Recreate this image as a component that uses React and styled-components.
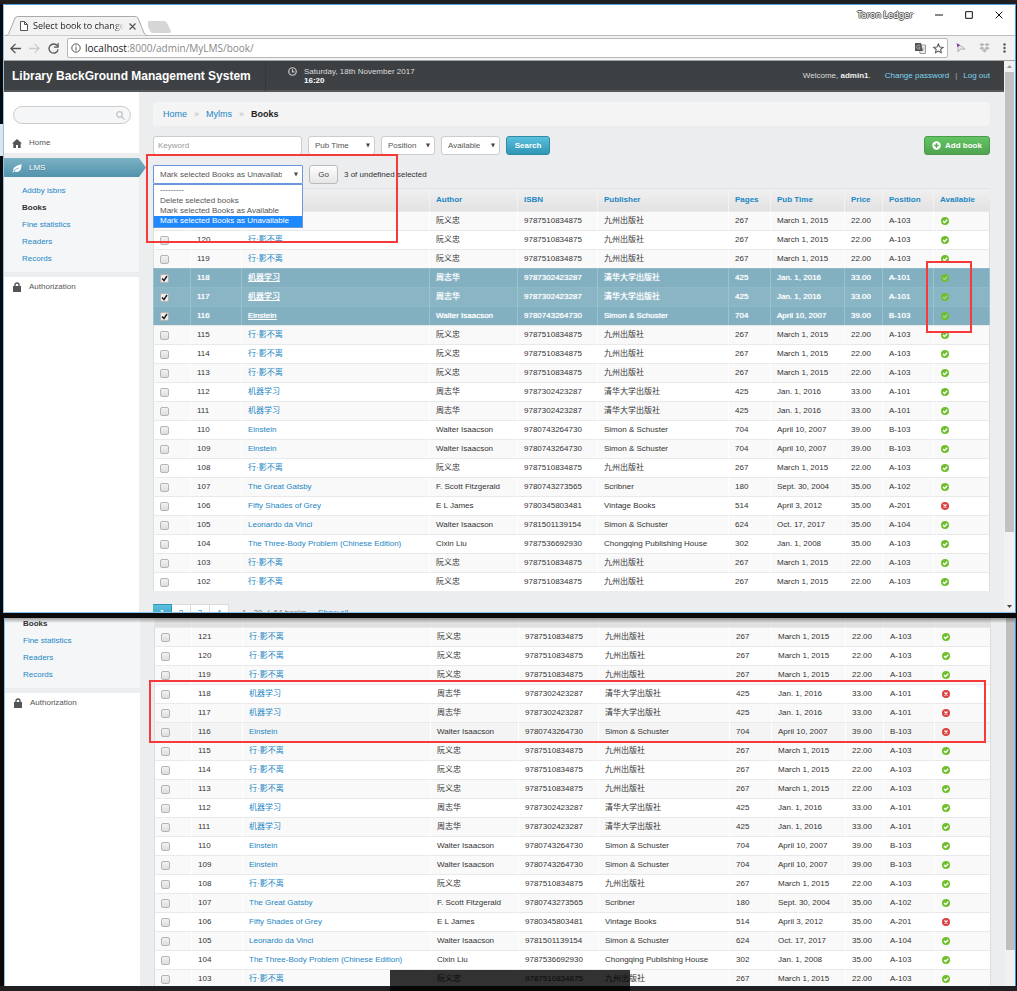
import React from "react";
import styled, { createGlobalStyle, css } from "styled-components";

const GlobalStyle = createGlobalStyle`
  * { box-sizing: border-box; }
  body { margin: 0; background: #000; overflow: hidden; }
  body, input, select, button, table {
    font-family: "Liberation Sans", Arial, "Noto Sans CJK SC", sans-serif;
    font-size: 8px;
    line-height: 10px;
  }
  ul { list-style: none; margin: 0; padding: 0; }
  a { color: #1b86c4; text-decoration: none; }
`;

const Desktop = styled.div`
  position: relative;
  display: flex;
  flex-direction: column;
  height: 100vh;
  overflow: hidden;
  background: #0a0a0a;
  border-top: 4px solid #202020;
`;

const BrowserWindow = styled.section`
  flex: none;
  margin: 0 1px 5px 3px;
  border: 1px solid #4ba0e0;
  border-left-color: #8cc3ec;
  border-bottom-color: #8cc3ec;
  background: #fff;
`;

const RearWindow = styled.section`
  position: relative;
  flex: 1;
  min-height: 0;
  display: flex;
  overflow: hidden;
  margin: 0 1px 0 4px;
  border: solid #3a96dd;
  border-width: 0 1px;
  border-left-color: #8cc3ec;
  background: #ecedef;
`;

const WindowShade = styled.div`
  position: absolute;
  z-index: 1;
  top: 0;
  left: 0;
  right: 0;
  height: 5px;
  background: linear-gradient(rgba(0, 0, 0, 0.35), rgba(0, 0, 0, 0));
  pointer-events: none;
`;

const TitleBar = styled.header`
  display: flex;
  align-items: flex-end;
  justify-content: space-between;
  height: 31px;
  padding-left: 2px;
  background: linear-gradient(#fff 30px, #bdbdbd 30px);
`;

const Tabs = styled.div`
  display: flex;
`;

const Tab = styled.div`
  position: relative;
  display: flex;
  align-items: center;
  width: 142px;
  height: 20px;
  padding: 0 12px 0 14px;
  gap: 5px;
  font: 9px/18px "Open Sans", sans-serif;
  color: #222;
`;

const TabShape = styled.svg`
  position: absolute;
  inset: 0;
`;

const TabLabel = styled.span`
  position: relative;
  flex: 1;
  overflow: hidden;
  white-space: nowrap;
  mask-image: linear-gradient(90deg, #000 88%, transparent);
`;

const TabIcon = styled.svg`
  position: relative;
  flex: none;
`;

const WindowButtons = styled.div`
  display: flex;
  align-items: center;
  align-self: flex-start;
  height: 20px;
  padding-right: 12px;
  gap: 22px;
`;

const UserName = styled.span`
  font: 9px/12px "Noto Sans", sans-serif;
  color: #fff;
  text-shadow: -1px 0 #555, 1px 0 #555, 0 -1px #555, 0 1px #555;
`;

const IconButton = styled.button`
  display: flex;
  padding: 0;
  border: 0;
  background: none;
`;

const Toolbar = styled.div`
  display: flex;
  align-items: center;
  height: 25px;
  padding: 0 9px 0 6px;
  gap: 8px;
  background: #f2f2f2;
  border-bottom: 1px solid #a5a5a5;
`;

const AddressBox = styled.label`
  flex: 1;
  display: flex;
  align-items: center;
  height: 20px;
  padding: 0 3px;
  gap: 4px;
  background: #fff;
  border: 1px solid #b8b8b8;
  border-radius: 2px;
`;

const AddressText = styled.span`
  flex: 1;
  font: 10px/16px "Open Sans", sans-serif;
  color: #888;
  b { font-weight: 400; color: #222; }
`;

const ToolbarIcons = styled.div`
  display: flex;
  align-items: center;
  gap: 13px;
`;

const Viewport = styled.div`
  display: flex;
`;

const Site = styled.div`
  flex: 1;
  min-width: 0;
`;

const SiteHeader = styled.header`
  display: flex;
  align-items: center;
  height: 31px;
  padding: 0 14px 0 8px;
  background: linear-gradient(#3b3f42, #3e4245);
  border-bottom: 2px solid #55585a;
  color: #ddd;
`;

const SiteTitle = styled.h1`
  margin: 0;
  width: 254px;
  line-height: 30px;
  font-size: 12px;
  color: #fff;
  border-right: 1px solid #34383a;
`;

const Clock = styled.div`
  display: flex;
  flex: 1;
  padding-left: 22px;
  gap: 7px;
  line-height: 9px;
  b { display: block; color: #fff; }
`;

const UserTools = styled.div`
  display: flex;
  color: #ddd;
  a { color: #7fd3f0; }
  b { color: #eee; }
`;

const Welcome = styled.span`
  margin-right: 14px;
`;

const Divider = styled.span`
  margin: 0 6px;
  color: #aaa;
`;

const Body = styled.div`
  display: flex;
  background: #ecedef;
`;

const Sidebar = styled.nav`
  flex: none;
  width: 135px;
  background: #fff;
  color: #666;
`;

const SearchWrap = styled.label`
  display: flex;
  align-items: center;
  height: 18px;
  margin: 14px 8px 9px 9px;
  padding: 0 5px 0 8px;
  border: 1px solid #ccc;
  border-radius: 9px;
  background: #f5f6f8;
`;

const SearchInput = styled.input`
  flex: 1;
  min-width: 0;
  padding: 0;
  border: 0;
  outline: 0;
  background: none;
`;

const MenuItem = styled.a`
  display: flex;
  align-items: center;
  height: 20px;
  padding-left: 8px;
  gap: 7px;
  color: #555;
`;

const ActiveItem = styled(MenuItem)`
  position: relative;
  height: 19px;
  margin-top: 5px;
  color: #fff;
  background: linear-gradient(#7cb1c4, #5193ad);
  text-shadow: 0 1px #4a8299;
`;

const Arrow = styled.svg`
  position: absolute;
  left: 100%;
  top: 0;
`;

const MenuGap = styled.div`
  height: 5px;
  background: #ecedef;
  & + a { margin-top: 0; }
`;

const SubMenu = styled.ul`
  padding: ${(p) => (p.$scrolled ? "0 0 5px" : "5px 0")};
  background: #f5f6f8;
`;

const SubLink = styled.a`
  display: block;
  height: ${(p) => (p.$cut ? 14 : 17)}px;
  line-height: ${(p) => (p.$cut ? 11 : 17)}px;
  padding-left: 18px;
  ${(p) => p.$current && css`color: #333; font-weight: 700;`}
`;

const Content = styled.main`
  position: relative;
  flex: 1;
  min-width: 0;
  padding: ${(p) => (p.$scrolled ? 0 : 10)}px 14px 0;
`;

const Breadcrumb = styled.nav`
  display: flex;
  align-items: center;
  height: 24px;
  margin-bottom: 10px;
  padding-left: 10px;
  gap: 7px;
  background: #f4f4f4;
  border-radius: 3px;
  font-size: 9px;
  color: #222;
  i { font-style: normal; color: #bbb; }
`;

const FilterRow = styled.div`
  display: flex;
  height: 19px;
  gap: 6px;
  margin-bottom: 10px;
`;

const field = css`
  height: 19px;
  border: 1px solid #ccc;
  border-radius: 3px;
  background: #fff;
  color: #555;
`;

const Keyword = styled.input`
  ${field}
  width: 149px;
  padding: 0 4px;
  &::placeholder { color: #999; }
`;

const SelectBox = styled.div`
  position: relative;
  width: ${(p) => p.$width}px;
`;

const Select = styled.select`
  ${field}
  width: 100%;
  padding: 0 13px 0 6px;
  appearance: none;
  outline: 0;
  ${(p) => p.$open && css`padding-right: 20px; border-color: #6a97dd; border-radius: 1px;`}
`;

const Caret = styled.svg`
  position: absolute;
  right: 5px;
  top: 7px;
  pointer-events: none;
`;

const tones = {
  blue: ["#5bc0de", "#2f96b4", "#2f8ba6", "#fff"],
  green: ["#62c462", "#51a351", "#4c9a4c", "#fff"],
  plain: ["#fefefe", "#e6e6e6", "#bbb", "#444"],
};

const Button = styled.button`
  display: flex;
  align-items: center;
  justify-content: center;
  gap: 4px;
  width: ${(p) => p.$width}px;
  height: 19px;
  padding: 0;
  border: 1px solid ${(p) => tones[p.$tone][2]};
  border-radius: 3px;
  background: linear-gradient(${(p) => tones[p.$tone][0]}, ${(p) => tones[p.$tone][1]});
  color: ${(p) => tones[p.$tone][3]};
  font-weight: ${(p) => (p.$tone === "plain" ? 400 : 700)};
  ${(p) => p.$end && css`margin-left: auto;`}
`;

const ActionRow = styled.div`
  position: relative;
  display: flex;
  align-items: center;
  gap: 6px;
  height: 19px;
  margin-bottom: 4px;
  color: #333;
`;

const OptionList = styled.ul`
  position: absolute;
  z-index: 2;
  top: 19px;
  left: 0;
  width: 150px;
  height: 44px;
  border: 1px solid #6a97dd;
  background: #fff;
  color: #555;
`;

const Option = styled.li`
  height: ${(p) => (p.$chosen ? 11 : 10)}px;
  padding-left: 6px;
  ${(p) => p.$chosen && css`background: #1e88ff; color: #fff;`}
  ${(p) => p.$tall && css`height: 11px; line-height: 11px;`}
`;

const Mark = styled.div`
  position: absolute;
  z-index: 3;
  border: 2px solid #f63a3a;
  pointer-events: none;
`;

const ActionMark = styled(Mark)`
  top: -11px;
  left: -7px;
  width: 252px;
  height: 89px;
`;

const AvailableMark = styled(Mark)`
  top: 169px;
  right: 32px;
  width: 46px;
  height: 72px;
`;

const ChangedMark = styled(Mark)`
  top: 62px;
  left: 9px;
  right: 19px;
  height: 63px;
`;

const Table = styled.table`
  width: 100%;
  table-layout: fixed;
  border-collapse: separate;
  border-spacing: 0;
  color: #333;
`;

const Col = styled.col`
  width: ${(p) => (p.$width ? p.$width + "px" : "auto")};
`;

const HeadCell = styled.th`
  height: ${(p) => (p.$cut ? 9 : 23)}px;
  padding: 0 0 0 6px;
  text-align: left;
  border-left: 1px solid ${(p) => (p.$cut ? "#e6e6e6" : "#f2f2f2")};
  background: ${(p) => (p.$cut ? "#e0e0e0" : "linear-gradient(#f0f0f0, #e2e2e2)")};
  ${(p) => !p.$cut && css`border-top: 1px solid #dde3e8;`}
`;

const Row = styled.tr`
  background: ${(p) => (p.$hover ? "#f4f4f4" : "#fff")};
  &:nth-child(odd) { background: #f9f9f9; }
  ${(p) => p.$selected && css`
    && { background: #8ab5c5; color: #fff; }
    &&:nth-child(even) { background: #82b0c1; }
    a { color: #fff; text-decoration: underline; }
    && td { border-color: #9dc2cf; border-top-color: #8fb9c8; text-shadow: 0 0 1px #fff; }
  `}
`;

const Cell = styled.td`
  height: 19px;
  padding: 0 0 0 6px;
  white-space: nowrap;
  border-top: 1px solid #e9e9e9;
  border-left: 1px solid #fff;
  &:first-child { border-left-color: #ddd; }
  &:last-child { border-right: 1px solid #ddd; }
  svg { display: block; margin-left: 1px; }
`;

const Check = styled.input`
  display: block;
  appearance: none;
  width: 9px;
  height: 9px;
  margin: 0;
  border: 1px solid #b5b5b5;
  border-radius: 2px;
  background: linear-gradient(#f2f2f2, #ddd);
  &:checked {
    background: #eee url("data:image/svg+xml,%3Csvg xmlns='http://www.w3.org/2000/svg' viewBox='0 0 7 7'%3E%3Cpath d='M1 3.5 3 5.5 6 1' fill='none' stroke='%23222' stroke-width='1.5'/%3E%3C/svg%3E");
  }
`;

const Pagination = styled.nav`
  display: flex;
  height: 8px;
  margin-top: 13px;
  overflow: hidden;
  line-height: 17px;
  color: #777;
`;

const PageLink = styled.a`
  flex: none;
  width: 19px;
  height: 19px;
  line-height: 15px;
  text-align: center;
  border: 1px solid #ddd;
  border-left-width: 0;
  background: #fff;
  ${(p) => p.$current && css`
    background: linear-gradient(#5bc0de, #2f96b4);
    border-color: #2f96b4;
    color: #fff;
    font-weight: 700;
  `}
`;

const PageInfo = styled.span`
  margin: 0 12px 0 13px;
`;

const ScrollTrack = styled.div`
  flex: none;
  display: flex;
  flex-direction: column;
  align-items: center;
  justify-content: space-between;
  width: 11px;
  padding: 4px 0;
  background: #f1f1f1;
`;

const ScrollThumb = styled.div`
  width: 9px;
  height: 460px;
  margin: 4px 0 auto;
  background: #c1c1c1;
`;

const RearTrack = styled.div`
  flex: none;
  width: 10px;
  padding-left: 1px;
  background: #f1f1f1;
`;

const RearThumb = styled.div`
  height: 332px;
  background: #bebebe;
`;

const TaskBar = styled.footer`
  flex: none;
  height: 5px;
  background: #202022;
`;

const TaskPreview = styled.div`
  position: absolute;
  z-index: 4;
  left: 390px;
  bottom: 0;
  width: 240px;
  height: 21px;
  background: rgba(0, 0, 0, 0.8);
`;

const EdgeStrip = styled.div`
  position: absolute;
  left: 0;
  top: 120px;
  width: 3px;
  height: 32px;
  background: #e4e4e4;
`;

const jiu = ["行·影不离", "阮义忠", "9787510834875", "九州出版社", 267, "March 1, 2015", "22.00", "A-103", true];
const ml = ["机器学习", "周志华", "9787302423287", "清华大学出版社", 425, "Jan. 1, 2016", "33.00", "A-101", true];
const einstein = ["Einstein", "Walter Isaacson", "9780743264730", "Simon & Schuster", 704, "April 10, 2007", "39.00", "B-103", true];
const books = [
  [121, ...jiu], [120, ...jiu], [119, ...jiu],
  [118, ...ml], [117, ...ml], [116, ...einstein],
  [115, ...jiu], [114, ...jiu], [113, ...jiu],
  [112, ...ml], [111, ...ml], [110, ...einstein], [109, ...einstein],
  [108, ...jiu],
  [107, "The Great Gatsby", "F. Scott Fitzgerald", "9780743273565", "Scribner", 180, "Sept. 30, 2004", "35.00", "A-102", true],
  [106, "Fifty Shades of Grey", "E L James", "9780345803481", "Vintage Books", 514, "April 3, 2012", "35.00", "A-201", false],
  [105, "Leonardo da Vinci", "Walter Isaacson", "9781501139154", "Simon & Schuster", 624, "Oct. 17, 2017", "35.00", "A-104", true],
  [104, "The Three-Body Problem (Chinese Edition)", "Cixin Liu", "9787536692930", "Chongqing Publishing House", 302, "Jan. 1, 2008", "35.00", "A-103", true],
  [103, ...jiu], [102, ...jiu],
];
const picked = [118, 117, 116];
const widths = [37, 51, null, 88, 80, 131, 42, 74, 38, 51, 57];
const headings = ["", "", "", "Author", "ISBN", "Publisher", "Pages", "Pub Time", "Price", "Position", "Available"];

function StatusIcon({ ok, mark }) {
  return (
    <svg width="8" height="8" viewBox="0 0 16 16" role="img" aria-label={ok ? "Available" : "Unavailable"}>
      <circle cx="8" cy="8" r="8" fill={ok ? "#6fbe2c" : "#d9403f"} />
      <path d={ok ? "M4 8l3 3 5.500-5.500" : "M5 5l6 6M11 5l-6 6"} fill="none" stroke={mark} strokeWidth="2.600" />
    </svg>
  );
}

function BookTable({ scrolled }) {
  return (
    <Table>
      <colgroup>{widths.map((w, i) => <Col key={i} $width={w} />)}</colgroup>
      <thead>
        <tr>
          {headings.map((h, i) => (
            <HeadCell key={i} $cut={scrolled}>{!scrolled && h && <a href="#sort">{h}</a>}</HeadCell>
          ))}
        </tr>
      </thead>
      <tbody>
        {books.map(([id, title, author, isbn, publisher, pages, date, price, position, ok]) => {
          const chosen = picked.includes(id);
          const selected = chosen && !scrolled;
          return (
            <Row key={id} $selected={selected} $hover={scrolled && id === 116}>
              <Cell><Check type="checkbox" aria-label={"Select " + id} defaultChecked={selected} /></Cell>
              <Cell>{id}</Cell>
              <Cell><a href="#book">{title}</a></Cell>
              <Cell>{author}</Cell>
              <Cell>{isbn}</Cell>
              <Cell>{publisher}</Cell>
              <Cell>{pages}</Cell>
              <Cell>{date}</Cell>
              <Cell>{price}</Cell>
              <Cell>{position}</Cell>
              <Cell><StatusIcon ok={ok && !(chosen && scrolled)} mark={selected ? "#a4cfae" : "#fff"} /></Cell>
            </Row>
          );
        })}
      </tbody>
    </Table>
  );
}

const LockIcon = () => (
  <svg width="10" height="10" viewBox="0 0 10 10">
    <path d="M1 4h8v6H1z" fill="#555" />
    <path d="M3 5V3a2 2 0 0 1 4 0v2" fill="none" stroke="#555" strokeWidth="1.400" />
  </svg>
);

function SideMenu({ scrolled }) {
  const links = ["Addby isbns", "Books", "Fine statistics", "Readers", "Records"];
  return (
    <Sidebar>
      {!scrolled && (
        <>
          <SearchWrap>
            <SearchInput aria-label="Search" />
            <svg width="9" height="9" viewBox="0 0 9 9" fill="none" stroke="#c4c4c4" strokeWidth="1.300">
              <circle cx="3.500" cy="3.500" r="2.800" /><path d="M5.500 5.500l3 3" />
            </svg>
          </SearchWrap>
          <MenuItem href="#home">
            <svg width="10" height="9" viewBox="0 0 10 9"><path d="M5 0l5 4.500H8.700V9H6V6H4v3H1.300V4.500H0z" fill="#555" /></svg>
            Home
          </MenuItem>
          <MenuGap />
          <ActiveItem href="#lms">
            <svg width="10" height="10" viewBox="0 0 10 10">
              <path d="M9.500 1C9.500 6 8 9 4.500 9 3.500 9 2.800 8.700 2.200 8.300L1 9.500.3 8.900 1.500 7.700C.3 3.800 5 3 9.500 1z" fill="#fff" />
              <path d="M2 8Q4 5.500 7 4.800" fill="none" stroke="#669fb5" strokeWidth=".8" />
            </svg>
            LMS
            <Arrow width="7" height="19" viewBox="0 0 7 19">
              <defs><linearGradient id="arrow" x2="0" y2="1"><stop stopColor="#7cb1c4" /><stop offset="1" stopColor="#5193ad" /></linearGradient></defs>
              <path d="M0 0l7 9.500L0 19z" fill="url(#arrow)" />
            </Arrow>
          </ActiveItem>
        </>
      )}
      <SubMenu $scrolled={scrolled}>
        {(scrolled ? links.slice(1) : links).map((l) => (
          <li key={l}><SubLink href="#section" $current={l === "Books"} $cut={scrolled && l === "Books"}>{l}</SubLink></li>
        ))}
      </SubMenu>
      <MenuGap />
      <MenuItem href="#auth"><LockIcon />Authorization</MenuItem>
    </Sidebar>
  );
}

function DropDown({ width, label, open }) {
  return (
    <SelectBox $width={width}>
      <Select aria-label={label} $open={open}><option>{label}</option></Select>
      <Caret width="4" height="5" viewBox="0 0 4 5"><path d="M0 .5h4L2 4.500z" fill="#444" /></Caret>
    </SelectBox>
  );
}

const Stroke = ({ d, size = 11, color = "#555", width = 1.4 }) => (
  <svg width={size} height={size} viewBox="0 0 12 12" fill="none" stroke={color} strokeWidth={width}><path d={d} /></svg>
);

function Chrome() {
  return (
    <>
      <TitleBar>
        <Tabs>
          <Tab>
            <TabShape width="142" height="20" viewBox="0 0 142 20">
              <path d="M0 20Q2 19 3 17L9 2Q10 .5 12 .5H129Q131 .5 132 2L138 17Q139 19 142 20z" fill="#f2f2f2" stroke="#aaa" />
            </TabShape>
            <TabIcon width="8" height="10" viewBox="0 0 8 10"><path d="M.5.5h4l3 3v6h-7zM4.500.5v3h3" fill="#fff" stroke="#555" /></TabIcon>
            <TabLabel>Select book to change</TabLabel>
            <TabIcon width="7" height="7" viewBox="0 0 7 7"><path d="M.5.5l6 6M6.500.5l-6 6" stroke="#555" strokeWidth="1.200" /></TabIcon>
          </Tab>
          <svg width="26" height="20" viewBox="0 0 26 20"><path d="M-1 5H16Q18 5 19 7L23 15Q23 17 21 17H5Q3 17 2 15L-2 7Q-2 5 0 5z" fill="#d6d6d6" /></svg>
        </Tabs>
        <WindowButtons>
          <UserName>Taron Ledger</UserName>
          <IconButton aria-label="Minimize"><Stroke size={8} width={1.5} color="#111" d="M0 6H12" /></IconButton>
          <IconButton aria-label="Maximize"><Stroke size={8} width={1.5} color="#111" d="M1 1H11V11H1z" /></IconButton>
          <IconButton aria-label="Close"><Stroke size={8} width={1.5} color="#111" d="M1 1L11 11M11 1L1 11" /></IconButton>
        </WindowButtons>
      </TitleBar>
      <Toolbar>
        <IconButton aria-label="Back"><Stroke d="M12 6H1M6 1L1 6l5 5" /></IconButton>
        <IconButton aria-label="Forward"><Stroke color="#ccc" d="M0 6H11M6 1l5 5-5 5" /></IconButton>
        <IconButton aria-label="Reload"><Stroke d="M10 3A5 5 0 1 0 11 7M11 0V4.500H6.500" /></IconButton>
        <AddressBox>
          <Stroke size={10} width={1.2} d="M6 1A5 5 0 1 0 6 11A5 5 0 1 0 6 1M6 5V9M6 3V4.200" />
          <AddressText><b>localhost</b>:8000/admin/MyLMS/book/</AddressText>
          <svg width="11" height="11" viewBox="0 0 11 11">
            <path d="M4 2h6.500v8.500H5z" fill="#eee" stroke="#888" strokeWidth=".8" />
            <path d="M0 0h6l2 8H0z" fill="#555" />
            <path d="M5 2.500A2 2 0 1 0 5 5.500V4.200H3.500M8 5h2M9 4.500Q9 7 7.500 8.500" fill="none" stroke="#bbb" strokeWidth=".8" />
          </svg>
          <svg width="14" height="11" viewBox="-3 0 15 12"><path d="M6 1l1.500 3.300 3.600.4-2.700 2.400.8 3.600L6 8.900l-3.200 1.800.8-3.600L.9 4.700l3.600-.4z" fill="none" stroke="#555" strokeWidth="1.100" /></svg>
        </AddressBox>
        <ToolbarIcons>
          <svg width="10" height="10" viewBox="0 0 10 10"><path d="M2 1v8l2.500-3H9z" fill="#ececec" stroke="#b0b0b0" /><path d="M.5 0l3.500 2.500L1.500 4z" fill="#7b2fa0" /></svg>
          <svg width="11" height="10" viewBox="0 0 11 10" fill="#b5b5b5"><path d="M3 0l2.500 1.500L3 3.300.3 1.600zM8 0l2.700 1.600L8 3.300 5.500 1.500zM3 3.500l2.500 1.700L3 6.900.3 5.200zM8 3.500l2.700 1.700L8 6.900 5.500 5.200zM3 7.500L5.500 6 8 7.500 5.500 9.500z" /></svg>
          <svg width="3" height="10" viewBox="0 0 3 10" fill="#555"><circle cx="1.500" cy="1.500" r="1.200" /><circle cx="1.500" cy="5" r="1.200" /><circle cx="1.500" cy="8.500" r="1.200" /></svg>
        </ToolbarIcons>
      </Toolbar>
    </>
  );
}

export default function App() {
  return (
    <Desktop>
      <GlobalStyle />
      <EdgeStrip />
      <BrowserWindow>
        <Chrome />
        <Viewport>
          <Site>
            <SiteHeader>
              <SiteTitle>Library BackGround Management System</SiteTitle>
              <Clock>
                <Stroke size={9} width={1.6} color="#ccc" d="M6 1A5 5 0 1 0 6 11A5 5 0 1 0 6 1M6 3V6.500H8.500" />
                <div>Saturday, 18th November 2017<b>16:20</b></div>
              </Clock>
              <UserTools>
                <Welcome>Welcome, <b>admin1</b>.</Welcome>
                <a href="#password">Change password</a><Divider>|</Divider><a href="#logout">Log out</a>
              </UserTools>
            </SiteHeader>
            <Body>
              <SideMenu />
              <Content>
                <Breadcrumb>
                  <a href="#home">Home</a><i>»</i><a href="#mylms">Mylms</a><i>»</i><b>Books</b>
                </Breadcrumb>
                <FilterRow>
                  <Keyword placeholder="Keyword" aria-label="Keyword" />
                  <DropDown width={67} label="Pub Time" />
                  <DropDown width={54} label="Position" />
                  <DropDown width={59} label="Available" />
                  <Button $tone="blue" $width={44}>Search</Button>
                  <Button $tone="green" $width={66} $end>
                    <svg width="9" height="9" viewBox="0 0 9 9"><circle cx="4.500" cy="4.500" r="4.200" fill="#fff" /><path d="M4.500 2.300v4.400M2.300 4.500h4.400" stroke="#55a955" strokeWidth="1.500" /></svg>
                    Add book
                  </Button>
                </FilterRow>
                <ActionRow>
                  <DropDown width={150} label="Mark selected Books as Unavailable" open />
                  <Button $tone="plain" $width={29}>Go</Button>
                  <span>3 of undefined selected</span>
                  <OptionList role="listbox" aria-label="Actions">
                    <Option role="option">---------</Option>
                    <Option role="option" $tall>Delete selected books</Option>
                    <Option role="option">Mark selected Books as Available</Option>
                    <Option role="option" aria-selected="true" $chosen>Mark selected Books as Unavailable</Option>
                  </OptionList>
                  <ActionMark />
                </ActionRow>
                <BookTable />
                <AvailableMark />
                <Pagination>
                  <PageLink href="#1" $current>1</PageLink>
                  <PageLink href="#2">2</PageLink>
                  <PageLink href="#3">3</PageLink>
                  <PageLink href="#4">4</PageLink>
                  <PageInfo>1 - 20 &nbsp;/ &nbsp;64 books</PageInfo>
                  <a href="#all">Show all</a>
                </Pagination>
              </Content>
            </Body>
          </Site>
          <ScrollTrack>
            <svg width="5" height="3" viewBox="0 0 5 3"><path d="M0 3h5L2.500 0z" fill="#999" /></svg>
            <ScrollThumb />
            <svg width="5" height="3" viewBox="0 0 5 3"><path d="M0 0h5L2.500 3z" fill="#444" /></svg>
          </ScrollTrack>
        </Viewport>
      </BrowserWindow>
      <RearWindow>
        <SideMenu scrolled />
        <Content $scrolled>
          <BookTable scrolled />
          <ChangedMark />
        </Content>
        <RearTrack><RearThumb /></RearTrack>
        <WindowShade />
      </RearWindow>
      <TaskBar />
      <TaskPreview />
    </Desktop>
  );
}
